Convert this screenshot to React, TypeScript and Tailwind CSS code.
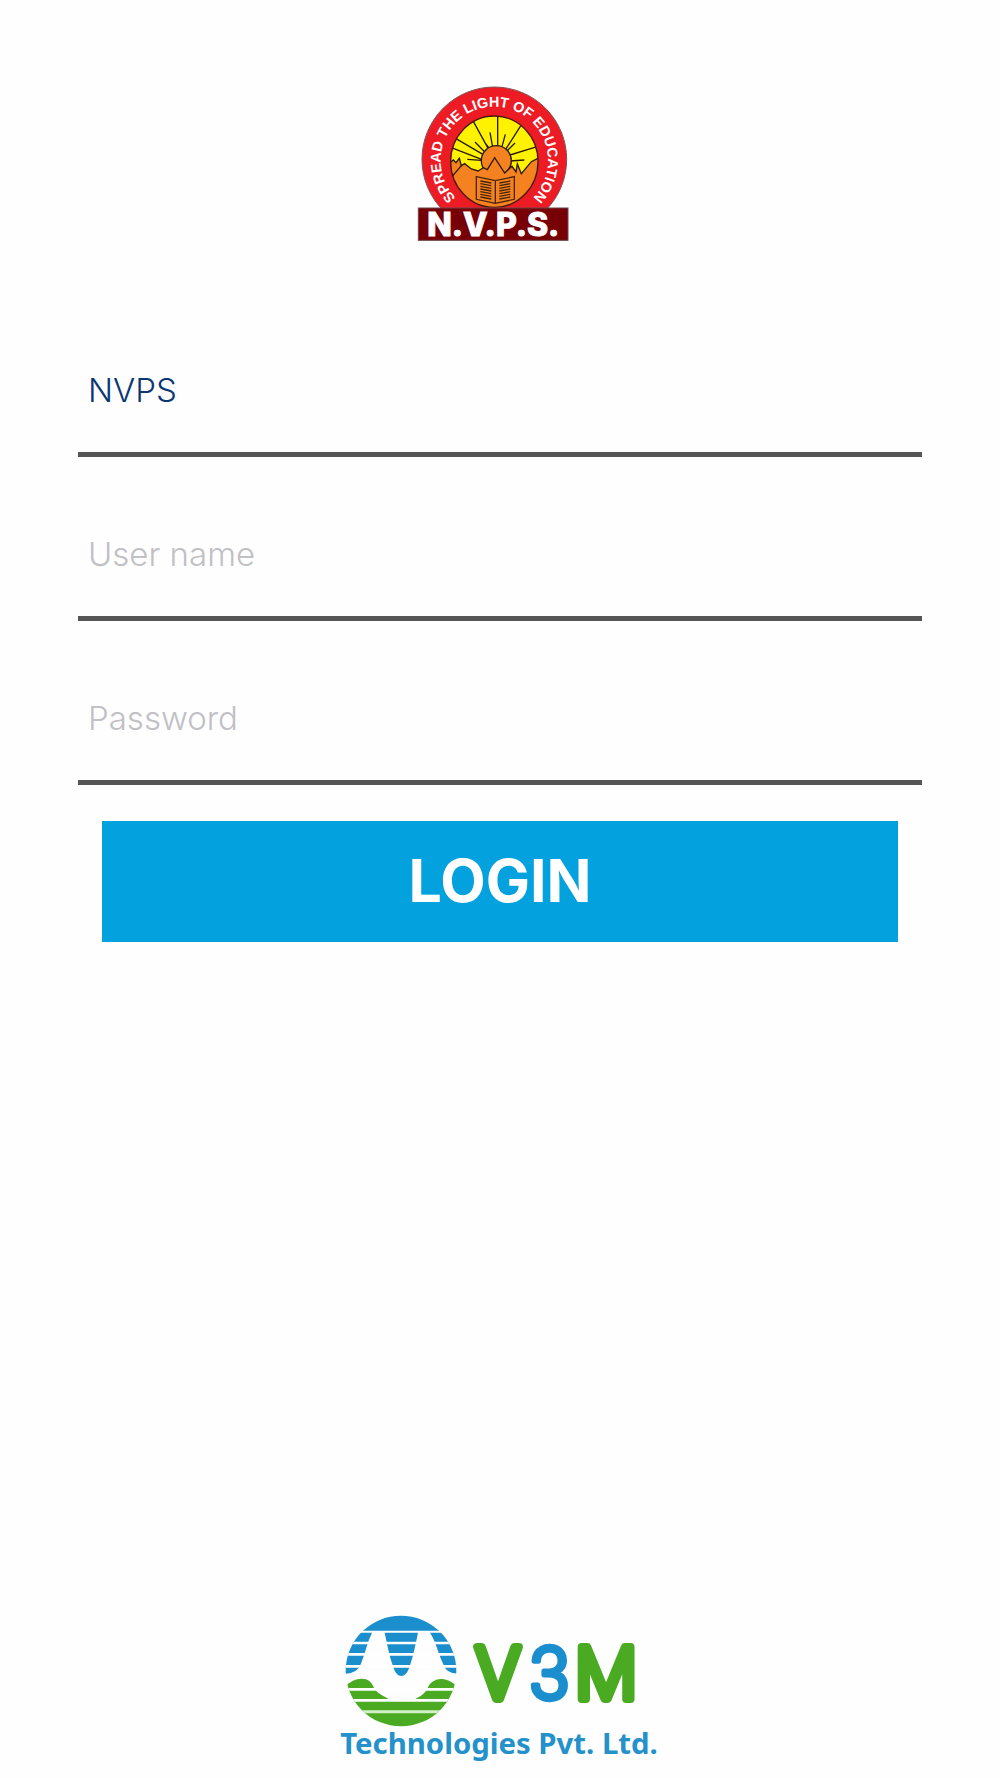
import type { InputHTMLAttributes } from 'react';

function SchoolLogo() {
  return (
    <svg viewBox="0 0 540 510" className="w-[180px]" role="img" aria-label="N.V.P.S. – Spread the light of education">
      <defs>
        <path id="motto" d="M 253 402 A 161 161 0 0 1 253 80 A 161 161 0 0 1 253 402" />
        <clipPath id="disc">
          <ellipse cx="253" cy="245" rx="131" ry="137" />
        </clipPath>
      </defs>
      <circle cx="253" cy="238" r="217" fill="#ed1c24" stroke="#7d5558" strokeWidth="3" />
      <g clipPath="url(#disc)" stroke="#2b1a08" strokeWidth="4">
        <rect x="110" y="100" width="290" height="290" fill="#fff200" stroke="none" />
        <path
          fill="none"
          d="M263 108V198M190 124L236 208M333 136L287 208M138 176L220 224M384 199L300 225M124 203L215 238M240 157L248 202M286 163L276 200M222 184L240 208M195 186L225 217M315 189L293 211M172 238L214 241M343 240L300 243"
        />
        <circle cx="259" cy="242" r="45" fill="#f58220" />
        <path
          fill="#f58220"
          d="M110 256L130 240L138 248L148 235L154 257L164 251L184 267L204 273L220 263L232 269L254 233L284 279L306 259L318 276L322 252L334 281L364 245L400 226V400H110Z"
        />
        <path fill="none" d="M119 298L154 257" />
      </g>
      <ellipse cx="253" cy="245" rx="131" ry="137" fill="none" stroke="#4a180a" strokeWidth="4" />
      <g fill="none" stroke="#4a260c">
        <path strokeWidth="4" d="M199 290L256 302L313 290V358L256 370L199 358ZM256 302V370" />
        <path
          strokeWidth="4"
          d="M211 303L244 309M211 311L244 317M211 319L244 325M211 327L244 333M211 335L244 341M211 343L244 349M211 351L244 357M268 309L301 303M268 317L301 311M268 325L301 319M268 333L301 327M268 341L301 335M268 349L301 343M268 357L301 351"
        />
      </g>
      <text fill="#fff" fontSize="43" textAnchor="middle" className="font-['Liberation_Sans',sans-serif] font-bold">
        <textPath href="#motto" startOffset="50%">SPREAD THE LIGHT OF EDUCATION</textPath>
      </text>
      <rect x="25" y="384" width="449" height="97" fill="#760006" stroke="#69474a" strokeWidth="3" />
      <text
        x="250"
        y="467"
        fill="#fff"
        stroke="#fff"
        strokeWidth="3"
        fontSize="96"
        textAnchor="middle"
        className="font-[Inter,sans-serif] font-extrabold"
      >
        N.V.P.S.
      </text>
    </svg>
  );
}

function CompanyLogo() {
  return (
    <svg viewBox="0 0 1020 534" className="w-[340px]" role="img" aria-label="V3M Technologies Pvt. Ltd.">
      <defs>
        <clipPath id="globe">
          <ellipse cx="213" cy="213" rx="166" ry="166" />
        </clipPath>
      </defs>
      <g clipPath="url(#globe)">
        <g fill="#1b8fce">
          <path d="M40 40H390V92H40Z" />
          <path d="M40 98H126C112 126 106 158 94 188C86 212 68 221 40 221Z" />
          <path d="M300 98H390V221C360 221 346 212 338 188C324 158 318 126 300 98Z" />
          <path d="M164 98H264C257 130 251 166 238 202C228 237 200 237 190 202C177 166 171 130 164 98Z" />
        </g>
        <g fill="#4aab22">
          <path d="M40 266C60 242 84 232 108 238C132 246 126 268 150 282C164 290 174 296 184 302H244C264 294 282 284 292 266C300 244 322 234 342 238C362 242 372 252 390 266V390H40Z" />
        </g>
        <path stroke="#fff" strokeWidth="8" d="M40 129H390M40 163H390M40 199H390M40 268H390M40 301H390" />
        <path stroke="#d2efc8" strokeWidth="9" d="M40 335H390" />
      </g>
      <g fontSize="214" strokeWidth="24" strokeLinejoin="round" className="font-[Roboto,sans-serif] font-light">
        <text x="504" y="297" textAnchor="middle" fill="#4aab22" stroke="#4aab22">V</text>
        <text x="659" y="297" textAnchor="middle" fill="#1b8fce" stroke="#1b8fce" strokeWidth="16">3</text>
        <text x="828" y="297" textAnchor="middle" fill="#4aab22" stroke="#4aab22">M</text>
      </g>
      <text x="507" y="462" textAnchor="middle" fontSize="88" fill="#2491ca" className="font-['Noto_Sans',sans-serif] font-bold">
        Technologies Pvt. Ltd.
      </text>
    </svg>
  );
}

function Field({ label, ...props }: { label: string } & InputHTMLAttributes<HTMLInputElement>) {
  return (
    <input
      aria-label={label}
      className="h-32 w-full border-b-5 border-[#555555] bg-transparent px-[10px] pb-[2px] text-[33px] font-[350] text-[#0b3674] outline-none placeholder:text-[#c0c0c5]"
      {...props}
    />
  );
}

export default function App() {
  return (
    <main className="flex min-h-screen flex-col items-center bg-[#fefefe] pt-20 font-[Inter,sans-serif]">
      <SchoolLogo />
      <form className="mt-[79px] flex w-full flex-col gap-9 px-[78px]" onSubmit={(e) => e.preventDefault()}>
        <Field label="School code" name="school" defaultValue="NVPS" />
        <Field label="User name" name="username" placeholder="User name" />
        <Field label="Password" name="password" type="password" placeholder="Password" />
        <button type="submit" className="mx-6 h-[121px] bg-[#03a2df] text-[59px] font-bold text-white">
          LOGIN
        </button>
      </form>
      <footer className="mt-auto">
        <CompanyLogo />
      </footer>
    </main>
  );
}
